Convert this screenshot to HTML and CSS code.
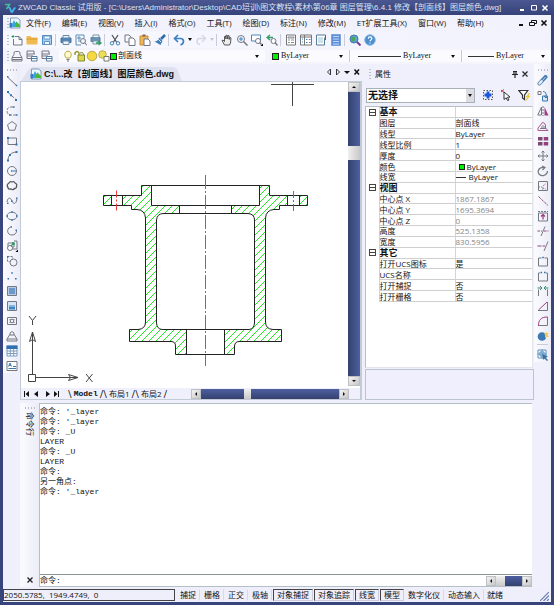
FILE: index.html
```
<!DOCTYPE html>
<html lang="zh-CN">
<head>
  <meta charset="UTF-8" />
  <meta name="viewport" content="width=device-width, initial-scale=1.0" />
  <title>ZWCAD Classic</title>
  <link rel="stylesheet" href="styles.css">
</head>
<body>
  <!-- Icon set -->
  <svg class="sprite" width="0" height="0">
    <symbol id="logo" viewBox="0 0 12 12"><path d="M1 2.500h4.500L2.500 7" stroke="#3fc08a" stroke-width="1.600"/><path d="M4.500 6c2-2 2 5 3.500 4s1-4 3.500-4" stroke="#46b7ea" stroke-width="1.800"/></symbol>
    <symbol id="dwg" viewBox="0 0 12 12"><path d="M1.500 1h7l2.500 2v8h-9.500z" fill="#eef6ff" stroke="#7f9db8"/><path d="M3 10V7l2-4 1.500 3L8 4v6z" fill="#39a8d8" stroke="none"/><path d="M6 10V6.500L8 5l3 3v2z" fill="#49b83a" stroke="none"/><path d="M0.500 6h2.500v4.500H0.500z" fill="#3b7bc4" stroke="none"/></symbol>
    <symbol id="new" viewBox="0 0 12 12"><path d="M4 2.500h4l3 3v5.500H2.500V5M8 2.500v3h3"/><path d="M0.500 2.500h3M2 1v3" stroke="#2e9b63"/></symbol>
    <symbol id="open" viewBox="0 0 12 12"><path d="M0.500 2h4l1 1.500h6V10.500H0.500z" fill="#f0bb50" stroke="none"/><path d="M0.500 4.500h11v1H0.500z" fill="#d99a2f" stroke="none"/></symbol>
    <symbol id="save" viewBox="0 0 12 12"><path d="M1.500 1.500h9v9h-9z" fill="#a9d1f2" stroke="#4e8ac6"/><path d="M3 2h6v3H3zM3.500 7.500h5v3h-5z" fill="#fff" stroke="#5b94cb"/></symbol>
    <symbol id="print" viewBox="0 0 12 12"><path d="M1 4h10v4.500H1z" fill="#4d86bb" stroke="#4c7396"/><path d="M3 1.500h6V4H3zM3 7h6v3.500H3z" fill="#eef4fa" stroke="#6a8dac"/></symbol>
    <symbol id="preview" viewBox="0 0 12 12"><path d="M1 1h8v3M1 1v10h5M3 3h2v2H3zM3 7h2" stroke="#5b8eb8"/><circle cx="8" cy="7" r="2.500" fill="#e9f4fc"/><path d="M10 9l2 2.500" stroke="#6d6d6d"/></symbol>
    <symbol id="plot" viewBox="0 0 12 12"><path d="M1 3.500h9v4H1z" fill="#6b93b8" stroke="#5b7c99"/><path d="M3 1h6v2.500H3zM3 7h5v3H3z" fill="#f4f8fb" stroke="#7894ab"/><path d="M6 9h4M8.500 7l2.500 2-2.500 2" stroke="#2f9a62" stroke-width="1.300"/></symbol>
    <symbol id="cut" viewBox="0 0 12 12"><path d="M3 1l4.500 7M9 1L4.500 8" stroke="#555" stroke-width="1.300"/><circle cx="3" cy="9.300" r="1.700" stroke="#3f7db4"/><circle cx="9" cy="9.300" r="1.700" stroke="#3f7db4"/></symbol>
    <symbol id="copy" viewBox="0 0 12 12"><path d="M1 1h4l2 2v5H1z"/><path d="M5 4h4l2 2v5.500H5z" fill="#fff"/></symbol>
    <symbol id="paste" viewBox="0 0 12 12"><path d="M1 2h8v9H1z" fill="#edb65b" stroke="#c98d34"/><path d="M3.500 0.500h3v2h-3z" fill="#7b6a50" stroke="none"/><path d="M5 5h4l2 2v4.500H5z" fill="#fff"/></symbol>
    <symbol id="brush" viewBox="0 0 12 12"><path d="M11 1L7 5" stroke="#2c6aa0" stroke-width="2.500"/><path d="M5 3.500l3.500 3.500-2 4-6-3.500c2 0 3.500-1 4.500-4z" fill="#3f7db6" stroke="none"/><path d="M4 5l3 3" stroke="#dceaf6"/></symbol>
    <symbol id="undo" viewBox="0 0 12 12"><path d="M5 1L1.500 4.500 5 8M2 4.500h5.500c4 0 4 5 0 6.500" stroke="#3e80c4" stroke-width="1.700"/></symbol>
    <symbol id="redo" viewBox="0 0 12 12"><path d="M7 1l3.500 3.500L7 8M10 4.500H5C1 4.500 1 9.500 5 10.500" stroke="#d5d9e2" stroke-width="1.500"/></symbol>
    <symbol id="hand" viewBox="0 0 12 12"><path d="M3.500 11L1 6.500l1-.5 1.500 1.500V2.500l1-.5.5 3V1.500l1-.5.8 4 .4-3.500 1 .3v3.700l.8-2 1 .5-.5 5L8.500 11z" fill="#eee" stroke="#444" stroke-width=".9"/></symbol>
    <symbol id="zoom" viewBox="0 0 12 12"><circle cx="5" cy="5" r="3.500" fill="#f0f7fd"/><path d="M7.500 7.500L11.500 11.500" stroke="#777" stroke-width="1.500"/><path d="M3 5h4M5 3v4" stroke="#3f82bd"/></symbol>
    <symbol id="zoomwin" viewBox="0 0 12 12"><path d="M0.500 1h9v6h-9z" stroke="#5287b6" fill="#fff"/><circle cx="7" cy="7" r="2.500" fill="#fff"/><path d="M8.500 8.500l2 2" stroke-width="1.400"/><path d="M12 9.500V12H9.500z" fill="#000" stroke="none"/></symbol>
    <symbol id="zoomprev" viewBox="0 0 12 12"><path d="M4 1L1 3.500 4 6M1.500 3.500H7" stroke="#389a6d" stroke-width="1.400"/><circle cx="7.500" cy="7" r="2.500" fill="#fff"/><path d="M9 8.500l2.500 3" stroke-width="1.400"/></symbol>
    <symbol id="props" viewBox="0 0 12 12"><path d="M1.500 1h9v10h-9z" fill="#fff" stroke="#757575"/><path d="M3 3h6v1H3zM3 6h2M6 6h3M3 8.500h2M6 8.500h3" stroke="#8a8f92"/></symbol>
    <symbol id="center" viewBox="0 0 12 12"><path d="M0.500 1h11v10H0.500zM4.500 1v10M0.500 3h11" fill="#fff" stroke="#777"/><path d="M2 5h1M2 8h1M6 5.500h1.500M9 5.500h1.500M6 8.500h1.500M9 8.500h1.500" stroke="#3f83bd"/></symbol>
    <symbol id="palette" viewBox="0 0 12 12"><path d="M1.500 1h9v2l-1 1v7h-8z" fill="#fff" stroke="#567b93"/><path d="M3 4h5M3 6h5M3 8h5" stroke="#9cc4d6"/><path d="M10.500 1v5" stroke="#2f789d"/></symbol>
    <symbol id="calc" viewBox="0 0 12 12"><path d="M1.500 0.500h9v11h-9z" fill="#5a8edb" stroke="#7fa4dd"/><path d="M3 2.500h6M3 5h6M3 7.500h6M3 10h6" stroke="#c4d8f4"/></symbol>
    <symbol id="globe" viewBox="0 0 12 12"><circle cx="5" cy="5" r="4" fill="#5ca4dd" stroke="#3e75a6"/><path d="M3 2.500l3 1v3L4 8 2 5z" fill="#4ba553" stroke="none"/><path d="M8 8l3.500 3.500" stroke="#7c3a8c" stroke-width="2"/></symbol>
    <symbol id="help" viewBox="0 0 12 12"><circle cx="6" cy="6" r="5.300" fill="#4b8fce" stroke="#8db8e0"/><path d="M4.300 4.700c0-2.300 3.500-2.300 3.500-.2C7.800 6 6 5.800 6 7.300M6 8.500v1" stroke="#fff" stroke-width="1.200"/></symbol>
    <symbol id="layers" viewBox="0 0 12 12"><path d="M3 4.500V3q0-1.500 1.500-1.500h3Q9 1.500 9 3v1.500L11 7.500H1z"/><path d="M1 8v3h10V8M1 9.500h10" /></symbol>
    <symbol id="layers2" viewBox="0 0 12 12"><path d="M1 4V1h7v3M1 4h8M1 6h6M1 8.500h4M1 4v4.500"/><path d="M5.500 6.500h5.500v4.500H5.500zM5.500 8.500H11" stroke="#527aa0" fill="#fff"/></symbol>
    <symbol id="bulb" viewBox="0 0 12 12"><path d="M4.200 8C1.500 5 3 1.200 6 1.200S10.500 5 7.800 8z" fill="#fffbd0" stroke="#b5a43c"/><path d="M4.500 9.500h3M5 11h2" stroke="#777"/></symbol>
    <symbol id="lock" viewBox="0 0 12 12"><path d="M1 5V3q2-3 4 0v3" stroke="#93972d" stroke-width="1.400"/><path d="M4 5h6.500v6H4z" fill="#d9d94b" stroke="#85882d"/><path d="M6 3q3-2 4 2" stroke="#85882d"/></symbol>
    <symbol id="sun" viewBox="0 0 12 12"><circle cx="6" cy="6" r="4.800" fill="#f6da3d" stroke="#b7a452"/></symbol>
    <symbol id="vpsun" viewBox="0 0 12 12"><circle cx="4.500" cy="4.500" r="3.800" fill="#eddd57" stroke="#b7ac55"/><path d="M6 6.500h5v4.500H6z" fill="#fff" stroke="#777b66"/></symbol>

    <symbol id="line" viewBox="0 0 12 12"><path d="M1.500 2L10.500 10.500"/><path d="M1 1h1.500v1.500H1zM9.800 9.800h1.500v1.500H9.800z" class="dot"/></symbol>
    <symbol id="xline" viewBox="0 0 12 12"><path d="M1 1.500l10 9" stroke-dasharray="4 1.500"/><path d="M1 1h2v2H1zM4 4.200h2v2H4zM9 9h2v2H9z" class="dot"/></symbol>
    <symbol id="pline" viewBox="0 0 12 12"><path d="M7 2H4.500C0 2 0 9.500 4 10h6" stroke-dasharray="3 1.200"/><path d="M7 1.200h1.600v1.600H7zM3 9.200h1.600v1.600H3zM10 9.200h1.600v1.600H10z" class="dot"/></symbol>
    <symbol id="polygon" viewBox="0 0 12 12"><path d="M6 1.500l4.500 3.300-1.700 5.400H3.200L1.500 4.800z"/></symbol>
    <symbol id="rect" viewBox="0 0 12 12"><path d="M2 3h8.500v6.500H2z"/><path d="M1 2h2v2H1zM9.500 8.500h2v2h-2z" class="dot"/></symbol>
    <symbol id="arc" viewBox="0 0 12 12"><path d="M2 11C2 5 5 2.500 10.500 2"/><path d="M1 9.500h2v2H1zM3 4h2v2H3zM9.500 1h2v2h-2z" class="dot"/></symbol>
    <symbol id="circle" viewBox="0 0 12 12"><circle cx="6" cy="6" r="4.500"/><path d="M5 5.200h1.600v1.600H5z" class="dot"/><path d="M7 6h3" stroke="#3b76ac"/></symbol>
    <symbol id="cloud" viewBox="0 0 12 12"><path d="M3 3q1-2 3-1 2-1 3 1 2.500 1 1.500 3 .5 2-2 2.500Q7 10.500 5 9 2 9.500 2 7.500 0 5 3 3z" stroke="#555" stroke-width="1.300"/></symbol>
    <symbol id="spline" viewBox="0 0 12 12"><path d="M1 7C2 1 5 3 6 6s4 4 5-2"/><path d="M1 7.500h1.500V9H1zM5 5.500h1.500V7H5zM10 2.500h1.500V4H10z" class="dot"/></symbol>
    <symbol id="ellipse" viewBox="0 0 12 12"><ellipse cx="6" cy="6" rx="5" ry="3.800"/><path d="M5.200 1.200h1.600v1.600H5.200zM.4 5.200H2v1.600H.4zM10 5.200h1.600v1.600H10zM5.200 9.200h1.600v1.600H5.200z" class="dot"/></symbol>
    <symbol id="earc" viewBox="0 0 12 12"><path d="M4.500 2C0 4 1 10 6 10c3 0 4.500-2 4.500-4"/><path d="M4.500 1.200H6v1.600H4.500zM9.500 4.500H11V6H9.500z" class="dot"/></symbol>
    <symbol id="insblk" viewBox="0 0 12 12"><path d="M2 3h6v4H2zM8 1h3v8H6" /><circle cx="4" cy="8" r="2.500" fill="#fff"/><path d="M5 6l3-3M8 5V3H6" stroke="#2f9b66" stroke-width="1.300"/><path d="M12 9.500V12H9.500z" fill="#000" stroke="none"/></symbol>
    <symbol id="mkblk" viewBox="0 0 12 12"><path d="M1.500 1.500h5v2M1.500 1.500v5h2" stroke-dasharray="2 1"/><circle cx="7.500" cy="7.500" r="3.500"/><path d="M1 1h1.500v1.500H1z" class="dot"/></symbol>
    <symbol id="point" viewBox="0 0 12 12"><path d="M5.200 2.200h1.600v1.600H5.200zM1.500 8h1.600v1.600H1.500zM9 8h1.600v1.600H9z" class="dot"/></symbol>
    <symbol id="hatch" viewBox="0 0 12 12"><path d="M1.500 1.500h9v9h-9z" fill="#b7cbe4"/><path d="M3 3h6v6H3z" fill="#6d98cb" stroke="none"/></symbol>
    <symbol id="gradient" viewBox="0 0 12 12"><path d="M1.500 1.500h9v9h-9z" fill="#d5e5f6"/><path d="M3 5h6v2H3z" fill="#82b4df" stroke="none"/><path d="M3 7h6v2.500H3z" fill="#3f84c4" stroke="none"/></symbol>
    <symbol id="region" viewBox="0 0 12 12"><path d="M1.500 2.500h9v7h-9z"/><circle cx="6" cy="6" r="1.800"/><path d="M3.500 4l1 1M8.500 4l-1 1M3.500 8l1-1M8.500 8l-1-1"/></symbol>
    <symbol id="wipe" viewBox="0 0 12 12"><path d="M4 5V3q2-3 4 0v2M3.500 5h5L11 9v2H1V9zM1 9h10"/></symbol>
    <symbol id="table" viewBox="0 0 12 12"><path d="M1 1h10v10H1zM1 6h10M1 8.500h10M4.300 3v8M7.700 3v8" fill="#fff" stroke="#7d9cbd"/><path d="M.5.5h11V4H.5z" fill="#2f70b4" stroke="none"/></symbol>
    <symbol id="mtext" viewBox="0 0 12 12"><path d="M1 1.500h10v9H1z" fill="#fff"/><path d="M2.500 6.500L4 3l1.500 3.500M3 5.300h2M7 6.500h3M2.500 8.500H10" stroke="#3e78ad"/></symbol>

    <symbol id="erase" viewBox="0 0 12 12"><path d="M2.500 8.500L8.500 2" stroke="#477db0" stroke-width="4" stroke-linecap="round"/><path d="M2.500 8.500L4.500 6.300" stroke="#e4edf6" stroke-width="2.500" stroke-linecap="round"/><path d="M5 6l3.500-4" stroke="#b9d1e8"/></symbol>
    <symbol id="copyobj" viewBox="0 0 12 12"><path d="M1 1.500h3v3H1z"/><path d="M5.500 6h5v5h-5z" fill="#d5e7f7" stroke="#3b78ae"/><path d="M6 1.500q4 0 3 6M7 6l2 2 2-2" stroke="#3b78ae"/></symbol>
    <symbol id="mirror" viewBox="0 0 12 12"><path d="M4.500 2v8H.8z"/><path d="M6 1v10" stroke-dasharray="2 1"/><path d="M7.500 2v8.500h4z" fill="#9e3f82" stroke="none"/></symbol>
    <symbol id="offset" viewBox="0 0 12 12"><path d="M1 10.500h10L8.500 8V5Q6 0 3.500 5L1 8z" stroke="#aa5b91"/><path d="M3 8.500h6M5 8V6.500q1-2 2 0V8"/></symbol>
    <symbol id="array" viewBox="0 0 12 12"><path d="M1 2h4.500v3.500H1zM1 7h4.500v3.500H1z" fill="#7a4a74" stroke="none"/><path d="M6.700 2h4.500v3.500H6.700zM6.700 7h4.500v3.500H6.700z" fill="#93417c" stroke="none"/></symbol>
    <symbol id="move" viewBox="0 0 12 12"><path d="M6 1v10M1 6h10M4.500 2.500L6 1l1.500 1.500M4.500 9.500L6 11l1.500-1.500M2.500 4.500L1 6l1.500 1.500M9.500 4.500L11 6 9.500 7.500"/></symbol>
    <symbol id="rotate" viewBox="0 0 12 12"><path d="M5 1l3 1.500L5.500 5M7.500 2.500C1 2 0 7 2.500 9.500s8 .5 8-3.500" stroke-width="1.200"/></symbol>
    <symbol id="scale" viewBox="0 0 12 12"><path d="M1.500 1.500h9v9h-9z"/><path d="M2 7h3.500v3.500" stroke-dasharray="1 1"/><path d="M6 6l3-2.500M6 8l2.500 1" stroke="#9e3f82" stroke-dasharray="1 1"/></symbol>
    <symbol id="stretch" viewBox="0 0 12 12"><path d="M1.500 1.500l9.500 9" stroke="#8a4a7b" stroke-dasharray="3 1"/></symbol>
    <symbol id="lengthen" viewBox="0 0 12 12"><path d="M1.500 3v8h9V3z"/><path d="M1 1.500h10" stroke-dasharray="2 1"/><path d="M6 9.500V5M4 6.500l2-2 2 2" stroke="#9e3f82" stroke-width="1.300"/></symbol>
    <symbol id="trim" viewBox="0 0 12 12"><path d="M4 11L8 1.500"/><path d="M.5 6H5M7 6h4.500" stroke="#8a4a7b" stroke-dasharray="2.500 1"/></symbol>
    <symbol id="extend" viewBox="0 0 12 12"><path d="M7 11l4-9.500"/><path d="M.5 6H8" stroke="#8a4a7b" stroke-dasharray="4 1"/></symbol>
    <symbol id="break1" viewBox="0 0 12 12"><path d="M4.500 3H1.500v8h9V3h-3"/><path d="M5.200 1.700h1.600v1.600H5.200z" class="dot"/></symbol>
    <symbol id="break2" viewBox="0 0 12 12"><path d="M3 3H1.500v8h9V3H9"/><path d="M3.500 1.700h1.600v1.600H3.500zM7 1.700h1.600v1.600H7z" class="dot"/></symbol>
    <symbol id="join" viewBox="0 0 12 12"><path d="M1.500 11V4.500M10.500 11V4.500"/><path d="M.5 3h4M3 1l2 2-2 2M11.500 3h-4M9 1L7 3l2 2" stroke="#3a8e6d"/></symbol>
    <symbol id="chamfer" viewBox="0 0 12 12"><path d="M1 10.500h9.500V2"/><path d="M1.500 10l8.500-8" stroke="#9e3f82"/></symbol>
    <symbol id="fillet" viewBox="0 0 12 12"><path d="M1 10.500h9.500V2"/><path d="M1.500 10.500C1.500 5 4 2 10.500 2" stroke="#9e3f82"/></symbol>
    <symbol id="explode" viewBox="0 0 12 12"><circle cx="5" cy="6.500" r="4.300" fill="#3b79b4" stroke="none"/><path d="M9 1l.7 2L12 3l-1.500 1.700L12 7H9.500L8 8V5L7 3.500h1.500z" fill="#f1c75c" stroke="none"/></symbol>
    <symbol id="blkedit" viewBox="0 0 12 12"><path d="M1 1h8v8H1zM3 3h4v4H3zM.500 5h9M5 .500v9" stroke="#5a91c0"/><path d="M5 5l6 2.500-2.500 1 2.500 2.500-1 1-2.500-2.500L6.500 11z" fill="#3b6e9c" stroke="none"/></symbol>

    <symbol id="quicksel" viewBox="0 0 12 12"><path d="M1.500 1.500h9v9h-9z" stroke="#555" stroke-dasharray="1.500 1.500"/><path d="M6 2.500v7M2.500 6h7" stroke="#1857d8" stroke-width="2.800"/></symbol>
    <symbol id="selobj" viewBox="0 0 12 12"><path d="M1 1l4 3M4 .5L1 3" stroke="#d23535"/><path d="M4 3l6 5-2.500.3L9 11l-1.500.5-1.300-2.700L4 10.500z" fill="#fff" stroke="#333"/></symbol>
    <symbol id="filter" viewBox="0 0 12 12"><path d="M.8 1.500h9L6.500 6v4.500l-2-1.500V6z" fill="#fff" stroke="#333" stroke-width="1.200"/><path d="M11.500 4L8 8h2l-2 3.500L12 7h-2z" fill="#f3da23" stroke="#d8b81c" stroke-width=".5"/></symbol>
  </svg>

  <header class="titlebar">
    <svg class="icon"><use href="#logo"/></svg>
    <h1>ZWCAD Classic 试用版 - [C:\Users\Administrator\Desktop\CAD培训\图文教程\素材\第06章 图层管理\6.4.1 修改【剖面线】图层颜色.dwg]</h1>
    <div class="winbtns">
      <button aria-label="最小化"><svg viewBox="0 0 8 8"><path d="M1 6h4" stroke-width="2"/></svg></button>
      <button aria-label="还原"><svg viewBox="0 0 8 8"><path d="M1.500 1.500h5v4.500h-5z"/></svg></button>
      <button aria-label="关闭"><svg viewBox="0 0 8 8"><path d="M1.500 1.500l5 5M6.500 1.500l-5 5" stroke-width="1.600"/></svg></button>
    </div>
  </header>

  <div class="shell">
    <nav class="menubar">
      <i class="grip"></i>
      <svg class="icon"><use href="#dwg"/></svg>
      <button>文件(F)</button><button>编辑(E)</button><button>视图(V)</button><button>插入(I)</button><button>格式(O)</button><button>工具(T)</button><button>绘图(D)</button><button>标注(N)</button><button>修改(M)</button><button>ET扩展工具(X)</button><button>窗口(W)</button><button>帮助(H)</button>
      <div class="winbtns dark">
        <button aria-label="最小化"><svg viewBox="0 0 8 8"><path d="M1 6h4" stroke-width="2"/></svg></button>
        <button aria-label="还原"><svg viewBox="0 0 8 8"><path d="M2.500 3V1.500h5v3H6M.5 3.500h5V6.500h-5z"/></svg></button>
        <button aria-label="关闭"><svg viewBox="0 0 8 8"><path d="M1.500 1.500l5 5M6.500 1.500l-5 5" stroke-width="1.600"/></svg></button>
      </div>
    </nav>

    <div class="toolbar">
      <i class="grip"></i>
      <button aria-label="新建"><svg class="icon"><use href="#new"/></svg></button>
      <button aria-label="打开"><svg class="icon"><use href="#open"/></svg></button>
      <button aria-label="保存"><svg class="icon"><use href="#save"/></svg></button>
      <i class="sep"></i>
      <button aria-label="打印"><svg class="icon"><use href="#print"/></svg></button>
      <button aria-label="打印预览"><svg class="icon"><use href="#preview"/></svg></button>
      <button aria-label="发布"><svg class="icon"><use href="#plot"/></svg></button>
      <i class="sep"></i>
      <button aria-label="剪切"><svg class="icon"><use href="#cut"/></svg></button>
      <button aria-label="复制"><svg class="icon"><use href="#copy"/></svg></button>
      <button aria-label="粘贴"><svg class="icon"><use href="#paste"/></svg></button>
      <button aria-label="特性匹配"><svg class="icon"><use href="#brush"/></svg></button>
      <i class="sep"></i>
      <button aria-label="放弃" class="drop"><svg class="icon"><use href="#undo"/></svg><b class="tri"></b></button>
      <button aria-label="重做" class="drop off"><svg class="icon"><use href="#redo"/></svg><b class="tri"></b></button>
      <i class="sep"></i>
      <button aria-label="平移"><svg class="icon"><use href="#hand"/></svg></button>
      <button aria-label="缩放"><svg class="icon"><use href="#zoom"/></svg></button>
      <button aria-label="窗口缩放"><svg class="icon"><use href="#zoomwin"/></svg></button>
      <button aria-label="上一个视图"><svg class="icon"><use href="#zoomprev"/></svg></button>
      <i class="sep"></i>
      <button aria-label="特性"><svg class="icon"><use href="#props"/></svg></button>
      <button aria-label="设计中心"><svg class="icon"><use href="#center"/></svg></button>
      <button aria-label="工具选项板"><svg class="icon"><use href="#palette"/></svg></button>
      <button aria-label="计算器"><svg class="icon"><use href="#calc"/></svg></button>
      <i class="sep"></i>
      <button aria-label="查找"><svg class="icon"><use href="#globe"/></svg></button>
      <button aria-label="帮助"><svg class="icon"><use href="#help"/></svg></button>
    </div>

    <div class="toolbar layerbar">
      <i class="grip"></i>
      <button aria-label="图层特性"><svg class="icon"><use href="#layers"/></svg></button>
      <button aria-label="图层状态"><svg class="icon"><use href="#layers2"/></svg></button>
      <button aria-label="上一图层"><svg class="icon"><use href="#layers2"/></svg></button>
      <div class="combo layer">
        <svg class="icon"><use href="#bulb"/></svg><svg class="icon"><use href="#lock"/></svg><svg class="icon"><use href="#sun"/></svg><svg class="icon"><use href="#vpsun"/></svg>
        <i class="swatch"></i>
        <select aria-label="图层"><option>剖面线</option></select>
      </div>
      <div class="combo color"><i class="swatch"></i><select aria-label="颜色"><option>ByLayer</option></select></div>
      <div class="combo ltype"><i class="rule"></i><select aria-label="线型"><option>ByLayer</option></select></div>
      <div class="combo lweight"><i class="rule"></i><select aria-label="线宽"><option>ByLayer</option></select></div>
    </div>

    <main class="workspace">
      <div class="sidebar">
        <i class="hgrip"></i>
        <button aria-label="直线"><svg class="icon"><use href="#line"/></svg></button>
        <button aria-label="构造线"><svg class="icon"><use href="#xline"/></svg></button>
        <button aria-label="多段线"><svg class="icon"><use href="#pline"/></svg></button>
        <button aria-label="正多边形"><svg class="icon"><use href="#polygon"/></svg></button>
        <button aria-label="矩形"><svg class="icon"><use href="#rect"/></svg></button>
        <button aria-label="圆弧"><svg class="icon"><use href="#arc"/></svg></button>
        <button aria-label="圆"><svg class="icon"><use href="#circle"/></svg></button>
        <button aria-label="修订云线"><svg class="icon"><use href="#cloud"/></svg></button>
        <button aria-label="样条曲线"><svg class="icon"><use href="#spline"/></svg></button>
        <button aria-label="椭圆"><svg class="icon"><use href="#ellipse"/></svg></button>
        <button aria-label="椭圆弧"><svg class="icon"><use href="#earc"/></svg></button>
        <button aria-label="插入块"><svg class="icon"><use href="#insblk"/></svg></button>
        <button aria-label="创建块"><svg class="icon"><use href="#mkblk"/></svg></button>
        <button aria-label="点"><svg class="icon"><use href="#point"/></svg></button>
        <button aria-label="图案填充"><svg class="icon"><use href="#hatch"/></svg></button>
        <button aria-label="渐变色"><svg class="icon"><use href="#gradient"/></svg></button>
        <button aria-label="面域"><svg class="icon"><use href="#region"/></svg></button>
        <button aria-label="区域覆盖"><svg class="icon"><use href="#wipe"/></svg></button>
        <button aria-label="表格"><svg class="icon"><use href="#table"/></svg></button>
        <button aria-label="多行文字"><svg class="icon"><use href="#mtext"/></svg></button>
      </div>

      <section class="document">
        <div class="doctabs">
          <div class="doctab"><svg class="icon"><use href="#dwg"/></svg><span>C:\...改【剖面线】图层颜色.dwg</span></div>
          <svg class="docnav" viewBox="0 0 34 12"><path d="M4.500 3v6L1.500 6zM10.500 3v6l3-3z" fill="none" stroke="#333"/><path d="M18 5h6l-3 3z" fill="#111"/><path d="M28.500 3.500l4.500 5M33 3.500l-4.500 5" fill="none" stroke="#111" stroke-width="1.500"/></svg>
        </div>
        <div class="docbody">
          <div class="canvas">
            <svg class="drawing" viewBox="21 82 326 306">
              <defs>
                <pattern id="ansi31" width="7" height="7" patternUnits="userSpaceOnUse">
                  <path d="M-1 8L8 -1M-1 1L1 -1M6 8L8 6" stroke="#1cf01c" stroke-width="1"/>
                </pattern>
              </defs>
              <!-- hatched section, left and right halves -->
              <g fill="url(#ansi31)" stroke="none">
                <path d="M103.500 195.500H111.500V205.500H103.500zM123 195.500H141.500V185.500H151.500V206H179.500V213.500H164Q156.500 213.500 156.500 220V323Q157 329 162 329.500H186V354.500H175.500V346Q175.500 341.500 171 341.500H129.500V329.500H138Q145.500 329 145.500 322V218Q145 210 137 209.500H131.500V205.500H123z"/>
                <path d="M307.500 195.500H299.500V205.500H307.500zM287.500 195.500H269.500V185.500H259.500V206H231.500V213.500H247Q254.500 213.500 254.500 220V323Q254 329 249 329.500H224.500V354.500H234.500V346Q235 341.500 239 341.500H281.500V329.500H273Q265.500 329 265.500 322V218Q266 210 274 209.500H279.500V205.500H287.500z"/>
              </g>
              <!-- outlines -->
              <g fill="none" stroke="#222" stroke-width="1">
                <path d="M141.500 185.500H269.500V195.500H307.500V205.500H279.500V209.500H274Q266 210 265.500 218V322Q265.500 329 273 329.500H281.500V341.500H239Q235 341.500 234.500 346V354.500H175.500V346Q175.500 341.500 171 341.500H129.500V329.500H138Q145.500 329 145.500 322V218Q145 210 137 209.500H131.500V205.500H103.500V195.500H141.500z"/>
                <path d="M151.500 185.500V205.500H259.500V185.500M179.500 206V213.500M231.500 206V213.500"/>
                <path d="M163 213.500H248Q254.500 214 254.500 220V323Q254 329 249 329.500H162Q157 329 156.500 323V220Q157 214 163 213.500zM186.500 329.500V354.500M224.500 329.500V354.500"/>
                <path d="M111.500 195.500V205.500M122.500 195.500V205.500M287.500 195.500V205.500M299.500 195.500V205.500"/>
              </g>
              <!-- centre lines -->
              <g fill="none" stroke="#f03c3c">
                <path d="M205.500 175V366" stroke-dasharray="14 2 2 2"/>
                <path d="M116.500 190.500V211M293.500 191V212" stroke-dasharray="7 2 2 2"/>
              </g>
              <!-- cursor and ucs icon -->
              <g fill="none" stroke="#444">
                <path d="M271 84.500H314M292.500 82V106"/>
                <path d="M28.500 374.500h7v7h-7zM32.500 374.500V332M36 377.500H78M32.500 332l-3 9.500 3-2 3 2zM78 377.500l-9.500-3 2 3-2 3z"/>
                <path d="M29 316l3.500 4.500 3.500-4.500M32.500 320.500V325M86 374l6.500 8M92.500 374l-6.500 8"/>
              </g>
            </svg>
          </div>
          <div class="vscroll"><b class="up"></b><i class="track t1"></i><i class="thumb"></i><i class="track t2"></i><b class="down"></b></div>
        </div>
        <div class="sheets">
          <svg class="sheetnav" viewBox="0 0 40 10"><path d="M3.500 2v6M37.500 2v6" stroke="#111"/><path d="M8 2v6L4.500 5zM17 2v6l-4-3zM25 2v6l4-3zM33 2v6l3.500-3z" fill="#111"/></svg>
          <span class="slash">\</span><button class="active">Model</button><span class="slash">/\</span><button>布局1</button><span class="slash">/\</span><button>布局2</button><span class="slash">/</span>
          <div class="hscroll"><b class="left"></b><i class="track h1"></i><i class="thumb"></i><i class="track h2"></i><b class="right"></b></div>
        </div>
      </section>

      <aside class="properties">
        <div class="panelhead">
          <i class="grip"></i><h2>属性</h2>
          <svg viewBox="0 0 18 8"><path d="M2 1.500h4M3 1.500v3M5 1.500v3M1 4.500h6M4 5v3M11.500 1.500l5 5M16.500 1.500l-5 5" stroke="#222" stroke-width="1.200"/></svg>
        </div>
        <div class="selrow">
          <div class="selbox"><select aria-label="选择"><option>无选择</option></select></div>
          <button aria-label="快速选择"><svg class="icon"><use href="#quicksel"/></svg></button>
          <button aria-label="选择对象"><svg class="icon"><use href="#selobj"/></svg></button>
          <button aria-label="过滤"><svg class="icon"><use href="#filter"/></svg></button>
        </div>
        <div class="proplist">
          <table>
            <tr class="group"><td><i class="fold"></i></td><th>基本</th><td></td></tr>
            <tr><td></td><th>图层</th><td>剖面线</td></tr>
            <tr><td></td><th>线型</th><td>ByLayer</td></tr>
            <tr><td></td><th>线型比例</th><td>1</td></tr>
            <tr><td></td><th>厚度</th><td>0</td></tr>
            <tr><td></td><th>颜色</th><td><i class="swatch"></i>ByLayer</td></tr>
            <tr><td></td><th>线宽</th><td><i class="rule"></i>ByLayer</td></tr>
            <tr class="group"><td><i class="fold"></i></td><th>视图</th><td></td></tr>
            <tr class="ro"><td></td><th>中心点 X</th><td>1867.1867</td></tr>
            <tr class="ro"><td></td><th>中心点 Y</th><td>1695.3694</td></tr>
            <tr class="ro"><td></td><th>中心点 Z</th><td>0</td></tr>
            <tr class="ro"><td></td><th>高度</th><td>525.1358</td></tr>
            <tr class="ro"><td></td><th>宽度</th><td>830.5956</td></tr>
            <tr class="group"><td><i class="fold"></i></td><th>其它</th><td></td></tr>
            <tr><td></td><th>打开UCS图标</th><td>是</td></tr>
            <tr><td></td><th>UCS名称</th><td></td></tr>
            <tr><td></td><th>打开捕捉</th><td>否</td></tr>
            <tr><td></td><th>打开栅格</th><td>否</td></tr>
          </table>
        </div>
        <div class="hint"></div>
      </aside>

      <div class="sidebar right">
        <i class="hgrip"></i>
        <button aria-label="删除"><svg class="icon"><use href="#erase"/></svg></button>
        <button aria-label="复制对象"><svg class="icon"><use href="#copyobj"/></svg></button>
        <button aria-label="镜像"><svg class="icon"><use href="#mirror"/></svg></button>
        <button aria-label="偏移"><svg class="icon"><use href="#offset"/></svg></button>
        <button aria-label="阵列"><svg class="icon"><use href="#array"/></svg></button>
        <button aria-label="移动"><svg class="icon"><use href="#move"/></svg></button>
        <button aria-label="旋转"><svg class="icon"><use href="#rotate"/></svg></button>
        <button aria-label="比例"><svg class="icon"><use href="#scale"/></svg></button>
        <button aria-label="拉伸"><svg class="icon"><use href="#stretch"/></svg></button>
        <button aria-label="拉长"><svg class="icon"><use href="#lengthen"/></svg></button>
        <button aria-label="修剪"><svg class="icon"><use href="#trim"/></svg></button>
        <button aria-label="延伸"><svg class="icon"><use href="#extend"/></svg></button>
        <button aria-label="打断于点"><svg class="icon"><use href="#break1"/></svg></button>
        <button aria-label="打断"><svg class="icon"><use href="#break2"/></svg></button>
        <button aria-label="合并"><svg class="icon"><use href="#join"/></svg></button>
        <button aria-label="倒角"><svg class="icon"><use href="#chamfer"/></svg></button>
        <button aria-label="圆角"><svg class="icon"><use href="#fillet"/></svg></button>
        <button aria-label="分解"><svg class="icon"><use href="#explode"/></svg></button>
        <i class="hsep"></i>
        <button aria-label="块编辑"><svg class="icon"><use href="#blkedit"/></svg></button>
      </div>
    </main>

    <section class="command">
      <div class="cmdside">
        <i class="hgrip"></i>
        <span class="cmdtitle">命令行</span>
        <button aria-label="关闭命令行"><svg viewBox="0 0 8 8"><path d="M1.500 1.500l5 5M6.500 1.500l-5 5" stroke="#222" stroke-width="1.300"/></svg></button>
      </div>
      <div class="cmdmain">
        <pre class="history">命令: '_layer
命令: '_layer
命令: _U
LAYER
命令: _U
LAYER
命令:
另一角点:
命令: '_layer</pre>
        <div class="prompt">
          <label for="cmd">命令:</label>
          <input id="cmd" type="text">
          <div class="hscroll"><b class="left"></b><i class="thumb"></i><i class="track"></i><b class="right"></b></div>
        </div>
      </div>
    </section>

    <footer class="statusbar">
      <span class="coords">2050.5785,&nbsp; 1949.4749,&nbsp; 0</span>
      <button>捕捉</button><button>栅格</button><button>正交</button><button>极轴</button><button class="on">对象捕捉</button><button class="on">对象追踪</button><button class="on">线宽</button><button class="on">模型</button><button>数字化仪</button><button>动态输入</button>
      <span class="ready">就绪</span>
      <svg class="resize" viewBox="0 0 9 9"><path d="M0 9l9-9M3.500 9L9 3.500M7 9l2-2" stroke="#6b7cb0" stroke-width="1.200"/></svg>
    </footer>
  </div>
</body>
</html>
```

FILE: styles.css
```
* {
  margin: 0;
  padding: 0;
  box-sizing: border-box;
}
body {
  min-height: 100vh;
  display: flex;
  flex-direction: column;
  font-family: "Open Sans", "Noto Sans CJK SC", sans-serif;
  font-size: 8px;
  line-height: 10px;
  color: #111;
  background: #38457c;
}
.sprite {
  position: absolute;
}
button,
select,
input {
  font: inherit;
  color: inherit;
  border: none;
  background: none;
  appearance: none;
  outline: none;
}
button {
  display: flex;
  align-items: center;
  justify-content: center;
  white-space: nowrap;
}
i {
  display: block;
  flex: none;
}
.icon {
  display: block;
  flex: none;
  width: 12px;
  height: 12px;
  fill: none;
  stroke: #747981;
}
.dot {
  fill: #2f75b5;
  stroke: none;
}

/* Title bar */
.titlebar {
  display: flex;
  align-items: center;
  height: 15px;
  padding: 0 5px 0 4px;
  gap: 2px;
  color: #dfe3f2;
  background: linear-gradient(#4a5790, #36437a);
}
.titlebar h1 {
  flex: 1;
  font-family: "Liberation Sans", "Noto Sans CJK SC", sans-serif;
  font-size: 8px;
  font-weight: normal;
  white-space: nowrap;
  overflow: hidden;
}
.winbtns {
  display: flex;
  gap: 3px;
}
.winbtns svg {
  display: block;
  width: 8px;
  height: 8px;
  fill: none;
  stroke: #fff;
}
.winbtns.dark {
  margin-left: auto;
}
.winbtns.dark svg {
  stroke: #111;
}

.shell {
  flex: 1;
  display: flex;
  flex-direction: column;
  margin: 0 3px 3px;
  background: #f0f0fc;
}

/* Menu and toolbars */
.menubar {
  display: flex;
  align-items: center;
  height: 16px;
  padding: 0 3px 0 4px;
  background: #f2f2fc;
}
.menubar > button {
  margin-left: 11px;
}
.menubar > .icon + button {
  margin-left: 5px;
}
.grip {
  width: 2px;
  height: 10px;
  background: repeating-linear-gradient(#b9bcc9 0 1px, transparent 1px 3px);
}
.toolbar {
  display: flex;
  align-items: center;
  height: 17px;
  padding-left: 4px;
  background: linear-gradient(90deg, #f8f8ff, #f2f2fd);
}
.toolbar > button {
  width: 15px;
  height: 15px;
}
.toolbar > .drop {
  width: 22px;
  gap: 3px;
}
.tri {
  border: 2px solid transparent;
  border-top: 3px solid #111;
  border-bottom: 0;
}
.off .tri {
  border-top-color: #c4c8d2;
}
.sep {
  width: 1px;
  height: 12px;
  margin: 0 2px 0 1px;
  background: #c9ccd8;
}
.layerbar {
  height: 16px;
  background: #f4f4fd;
}
.combo {
  position: relative;
  display: flex;
  align-items: center;
  height: 12px;
  background: #fbfbff;
}
.combo::after,
.selbox::after {
  content: "";
  position: absolute;
  right: 6px;
  top: 5px;
  border: 2px solid transparent;
  border-top: 3px solid #111;
  border-bottom: 0;
}
.combo select {
  flex: 1;
  min-width: 0;
  height: 12px;
  padding-left: 2px;
  font-family: "Liberation Serif", "Noto Sans CJK SC", serif;
}
.combo.layer {
  flex: 205;
  margin-left: 5px;
  padding-left: 3px;
}
.combo.layer select {
  padding-left: 1px;
}
.combo.color {
  flex: 78;
  margin-left: 7px;
}
.combo.ltype {
  flex: 112;
  border-left: 1px solid #c9ccd8;
}
.combo.lweight {
  flex: 90;
  border-left: 1px solid #c9ccd8;
}
.swatch {
  width: 7px;
  height: 7px;
  background: #00f000;
  border: 1px solid #222;
}
.rule {
  height: 1px;
  background: #333;
}
.ltype .rule {
  width: 43px;
  margin-left: 8px;
}
.lweight .rule {
  width: 26px;
  margin-left: 6px;
}

/* Workspace */
.workspace {
  display: flex;
}
.sidebar {
  width: 17px;
  display: flex;
  flex-direction: column;
  align-items: center;
  align-self: flex-start;
  padding-top: 5px;
  background: linear-gradient(90deg, #fbfbff, #ececf8);
}
.sidebar button {
  width: 15px;
  height: 15px;
}
.hgrip {
  width: 10px;
  height: 2px;
  margin-bottom: 2px;
  background: repeating-linear-gradient(90deg, #b9bcc9 0 1px, transparent 1px 3px);
}
.hsep {
  width: 11px;
  height: 1px;
  margin: 1px 0 2px;
  background: #c9ccd8;
}
.document {
  flex: 1;
  min-width: 0;
  display: flex;
  flex-direction: column;
}
.doctabs {
  display: flex;
  align-items: flex-end;
  justify-content: space-between;
  height: 17px;
}
.doctab {
  display: flex;
  align-items: center;
  gap: 2px;
  height: 14px;
  padding: 0 8px 0 9px;
  margin-left: 1px;
  background: #dfe1ee;
  clip-path: polygon(0 100%, 5% 15%, 7% 0, 95% 0, 97% 15%, 100% 100%);
  font-family: "Liberation Sans", "Noto Sans CJK SC", sans-serif;
  font-size: 9px;
  font-weight: bold;
  white-space: nowrap;
}
.docnav {
  width: 34px;
  height: 12px;
  margin: 0 2px 3px;
}
.docbody {
  display: flex;
  border: 1px solid #c3ccd6;
  border-width: 1px 2px 0 1px;
  background: #fff;
}
.canvas {
  flex: 1;
  min-width: 0;
}
.drawing {
  display: block;
  width: 326px;
  height: 306px;
}
.vscroll {
  width: 12px;
  display: flex;
  flex-direction: column;
  padding-bottom: 2px;
}
.vscroll b,
.hscroll b {
  flex: none;
  display: flex;
  align-items: center;
  justify-content: center;
  width: 10px;
  height: 10px;
  background: linear-gradient(135deg, #f4f4f4, #c6c6c6);
  border: 1px solid #c0c0c4;
}
.vscroll b {
  width: 12px;
}
.vscroll b::after,
.hscroll b::after {
  content: "";
  border: 2px solid transparent;
}
.up::after {
  border-top: 0 !important;
  border-bottom-color: #111 !important;
}
.down::after {
  border-bottom: 0 !important;
  border-top-color: #111 !important;
}
.left::after {
  border-left: 0 !important;
  border-right-color: #111 !important;
}
.right::after {
  border-right: 0 !important;
  border-left-color: #111 !important;
}
.vscroll .track {
  background: linear-gradient(90deg, #34416f, #4d5f9f);
}
.hscroll .track {
  height: 10px;
  background: linear-gradient(#4d5f9f, #34416f);
}
.t1 {
  flex: 54;
}
.t2 {
  flex: 216;
}
.vscroll .thumb {
  height: 14px;
  background: linear-gradient(90deg, #f0f0f0, #c8c8c8);
}
.hscroll {
  display: flex;
}
.hscroll .thumb {
  width: 7px;
  height: 10px;
  background: linear-gradient(#f0f0f0, #c8c8c8);
}
.h1 {
  flex: 43;
}
.h2 {
  flex: 88;
}
.sheets {
  display: flex;
  align-items: center;
  height: 12px;
  padding-right: 11px;
  border: 1px solid #c3ccd6;
  border-width: 0 2px 1px 1px;
  white-space: nowrap;
}
.sheetnav {
  width: 40px;
  height: 10px;
  margin-right: 7px;
}
.sheets .active {
  font-family: "Liberation Mono", monospace;
  font-weight: bold;
}
.sheets button {
  margin: 0 2px;
}
.slash {
  font-size: 10px;
}
.sheets .hscroll {
  width: 158px;
  margin-left: auto;
}

/* Properties panel */
.properties {
  width: 172px;
  display: flex;
  flex-direction: column;
  padding: 0 0 0 3px;
}
.panelhead {
  display: flex;
  align-items: center;
  gap: 4px;
  height: 20px;
  padding: 0 5px 0 4px;
}
.panelhead h2 {
  flex: 1;
  font-size: 8px;
  font-weight: normal;
}
.panelhead svg {
  width: 18px;
  height: 8px;
}
.selrow {
  display: flex;
  align-items: center;
  height: 22px;
  gap: 6px;
  padding-right: 4px;
}
.selbox {
  position: relative;
  flex: 1;
  height: 15px;
  margin-left: 1px;
  background: #fff;
  border: 1px solid #a9b1b8;
}
.selbox::before {
  content: "";
  position: absolute;
  right: 0;
  top: 0;
  width: 8px;
  height: 13px;
  background: #dcdce2;
}
.selbox::after {
  right: 2px;
}
.selbox select {
  position: relative;
  width: 100%;
  height: 13px;
  padding-left: 1px;
  font-size: 10px;
  font-weight: bold;
}
.selrow .selbox + button {
  margin-left: 1px;
}
.proplist {
  flex: 1;
  margin-right: 1px;
  border: 1px solid #b5bfc6;
  border-right-color: #e4e6ee;
  border-bottom-color: #e4e6ee;
  background: #fff;
}
table {
  width: 100%;
  height: 195px;
  table-layout: fixed;
  border-collapse: collapse;
}
td,
th {
  padding: 0;
  font-weight: normal;
  text-align: left;
  line-height: 9px;
  white-space: nowrap;
  border-bottom: 1px solid #cfcfcf;
}
td:first-child {
  width: 13px;
  border-bottom: none;
}
th {
  width: 76px;
  border-left: 1px solid #d4d4d4;
}
td:last-child {
  border-left: 1px solid #d4d4d4;
}
.group th {
  font-size: 9px;
  font-weight: bold;
}
.ro td {
  color: #858585;
}
.fold {
  width: 7px;
  height: 7px;
  margin-left: 3px;
  border: 1px solid #444;
  background: linear-gradient(#444, #444) center / 5px 1px no-repeat;
}
td .swatch,
td .rule {
  display: inline-block;
  margin: 0 2px 0 3px;
}
td .swatch {
  width: 6px;
  height: 6px;
}
td .rule {
  width: 10px;
  margin: 0 3px 2px 0;
}
.hint {
  height: 31px;
  margin-top: 1px;
  border: 1px solid #b9c4cf;
  background: #efeffd;
}

/* Command line */
.command {
  flex: 1;
  display: flex;
  margin: 3px 19px 1px 17px;
}
.cmdside {
  width: 19px;
  display: flex;
  flex-direction: column;
  align-items: center;
  padding: 4px 0 3px;
  background: linear-gradient(90deg, #fbfbff, #ececf8);
}
.cmdtitle {
  writing-mode: vertical-rl;
  text-orientation: sideways;
  margin-top: 1px;
}
.cmdside button {
  margin-top: auto;
}
.cmdside svg {
  width: 8px;
  height: 8px;
}
.cmdmain {
  flex: 1;
  display: flex;
  flex-direction: column;
  border: 1px solid #b5bfc6;
  border-right: none;
  background: #fff;
  font-family: "Liberation Mono", "Noto Sans CJK SC", monospace;
}
.history {
  flex: 1;
  font: inherit;
  padding-top: 3px;
}
.prompt {
  display: flex;
  align-items: center;
  height: 12px;
  border-top: 1px solid #8e9692;
}
.prompt input {
  flex: 1;
  min-width: 0;
}
.prompt .hscroll {
  width: 46px;
}
.prompt .thumb {
  width: 9px;
}
.prompt .track {
  flex: 1;
}

/* Status bar */
.statusbar {
  display: flex;
  align-items: center;
  height: 14px;
  background: #efeffb;
}
.coords {
  width: 172px;
  height: 12px;
  border: 1px solid #444;
  margin-right: 1px;
}
.statusbar button {
  height: 12px;
  padding: 0 3px;
  border: 1px solid transparent;
  border-right-color: #d7d9e6;
}
.statusbar .on {
  margin-left: 1px;
  border-color: #444 #ccd #ccd #444;
}
.ready {
  margin-left: 3px;
}
.resize {
  width: 9px;
  height: 9px;
  margin: 2px 2px 0 auto;
}
```
